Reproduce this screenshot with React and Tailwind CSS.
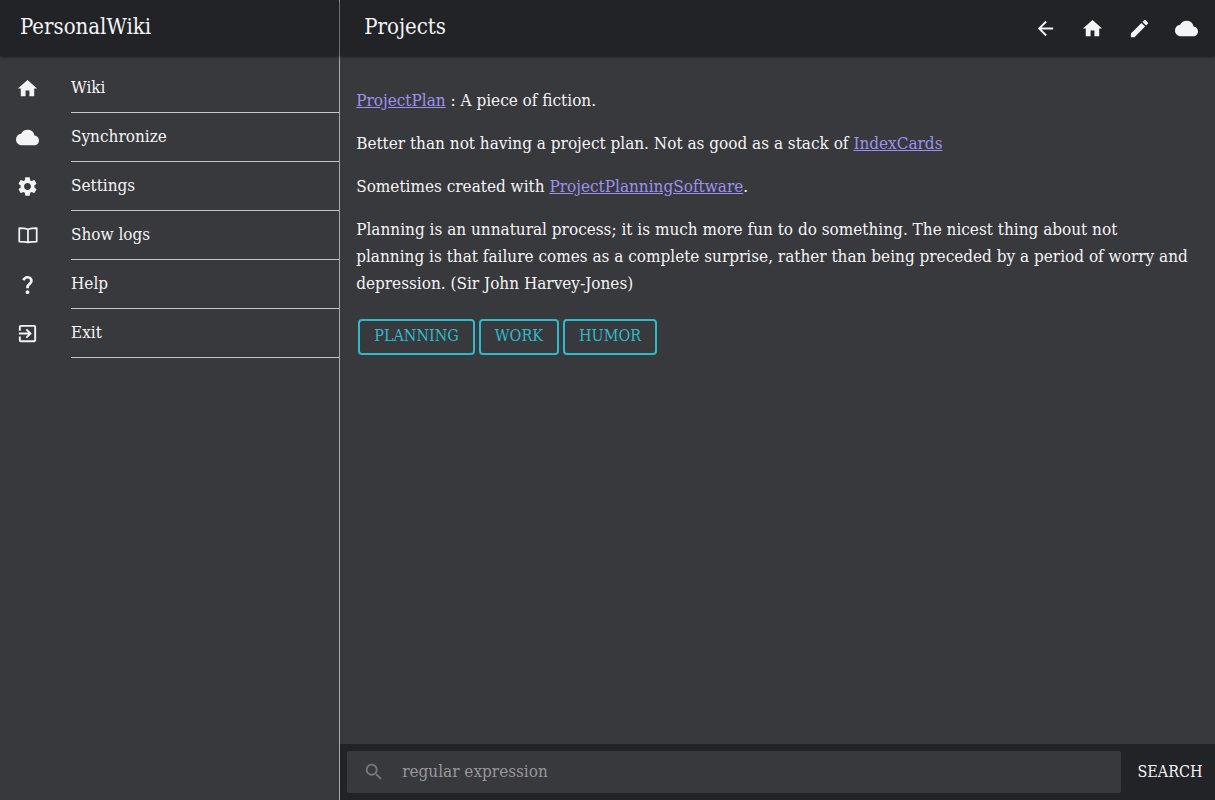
import React, { useState } from 'react';
import { MdHome, MdCloud, MdSettings, MdQuestionMark, MdExitToApp, MdArrowBack, MdEdit, MdSearch } from 'react-icons/md';

const BookIcon = ({ className }) => (
    <svg viewBox="0 0 24 24" className={className} fill="none" stroke="currentColor" strokeWidth="1.8" strokeLinejoin="round" aria-hidden="true">
        <path d="M12.500 5.500C10 4.600 6.500 4.300 3.400 4.300v14c3.100 0 6.600.2 9.100.9 2.500-.7 6-.9 9.100-.9v-14c-3.100 0-6.600.3-9.100 1.200zM12.500 5.500v13.700" />
    </svg>
);

const menuItems = [
    { label: 'Wiki', icon: MdHome },
    { label: 'Synchronize', icon: MdCloud },
    { label: 'Settings', icon: MdSettings },
    { label: 'Show logs', icon: BookIcon },
    { label: 'Help', icon: MdQuestionMark },
    { label: 'Exit', icon: MdExitToApp },
];

const actions = [
    { label: 'Back', icon: MdArrowBack },
    { label: 'Home', icon: MdHome },
    { label: 'Edit', icon: MdEdit },
    { label: 'Synchronize', icon: MdCloud },
];

const tags = ['PLANNING', 'WORK', 'HUMOR'];

const WikiLink = ({ children }) => (
    <a href={`#${children}`} className="text-[#9c91ee] underline">{children}</a>
);

const App = () => {
    const [query, setQuery] = useState('');

    return (
        <div className="flex min-h-screen bg-[#38393c] text-[#f4f4f6] text-[17px] font-['DejaVu_Serif_Condensed','DejaVu_Serif',serif]">
            <aside className="w-[28%] shrink-0 border-r border-[#a5a6aa]">
                <header className="flex h-14 items-center bg-[#222326] px-5 pb-1 shadow-sm shadow-black/40">
                    <h1 className="text-[22px]">PersonalWiki</h1>
                </header>
                <nav className="pt-2">
                    <ul>
                        {menuItems.map(({ label, icon: Icon }) => (
                            <li key={label}>
                                <button type="button" className="flex h-[49px] w-full items-stretch text-left">
                                    <span className="flex w-[71px] items-center pl-4">
                                        <Icon className="size-[23px]" />
                                    </span>
                                    <span className="flex flex-1 items-center border-b border-[#c4c5c8]">{label}</span>
                                </button>
                            </li>
                        ))}
                    </ul>
                </nav>
            </aside>

            <div className="flex min-w-0 flex-1 flex-col">
                <header className="flex h-14 items-center justify-between bg-[#222326] pr-[17px] pl-6 shadow-sm shadow-black/40">
                    <h2 className="pb-1 text-[22px]">Projects</h2>
                    <div className="flex gap-6">
                        {actions.map(({ label, icon: Icon }) => (
                            <button key={label} type="button" aria-label={label}>
                                <Icon className="size-[23px]" />
                            </button>
                        ))}
                    </div>
                </header>

                <main className="flex-1 pt-[31px] pr-[26px] pl-4 leading-[27px]">
                    <p className="mb-4"><WikiLink>ProjectPlan</WikiLink> : A piece of fiction.</p>
                    <p className="mb-4">
                        Better than not having a project plan. Not as good as a stack of <WikiLink>IndexCards</WikiLink>
                    </p>
                    <p className="mb-4">Sometimes created with <WikiLink>ProjectPlanningSoftware</WikiLink>.</p>
                    <p className="mb-[22px]">
                        Planning is an unnatural process; it is much more fun to do something. The nicest thing about not
                        planning is that failure comes as a complete surprise, rather than being preceded by a period of
                        worry and depression. (Sir John Harvey-Jones)
                    </p>
                    <div className="flex gap-1 pl-0.5">
                        {tags.map(tag => (
                            <button
                                key={tag}
                                type="button"
                                className="flex h-9 items-center rounded border-2 border-[#2fbacb] px-3.5 pb-0.5 text-base text-[#2fbacb]"
                            >
                                {tag}
                            </button>
                        ))}
                    </div>
                </main>

                <form
                    onSubmit={(e) => e.preventDefault()}
                    className="flex h-14 items-center bg-[#222326] pl-[7px]"
                >
                    <label className="flex h-[42px] flex-1 items-center rounded-xs bg-[#38393c] pl-4">
                        <MdSearch className="size-[22px] text-[#77787b]" />
                        <input
                            type="text"
                            aria-label="Search pages"
                            placeholder="regular expression"
                            value={query}
                            onChange={(e) => setQuery(e.target.value)}
                            className="ml-[17px] min-w-0 flex-1 bg-transparent outline-none placeholder:text-[#97989b]"
                        />
                    </label>
                    <button type="submit" className="w-[94px] pl-1 text-base">SEARCH</button>
                </form>
            </div>
        </div>
    );
};

export default App;
